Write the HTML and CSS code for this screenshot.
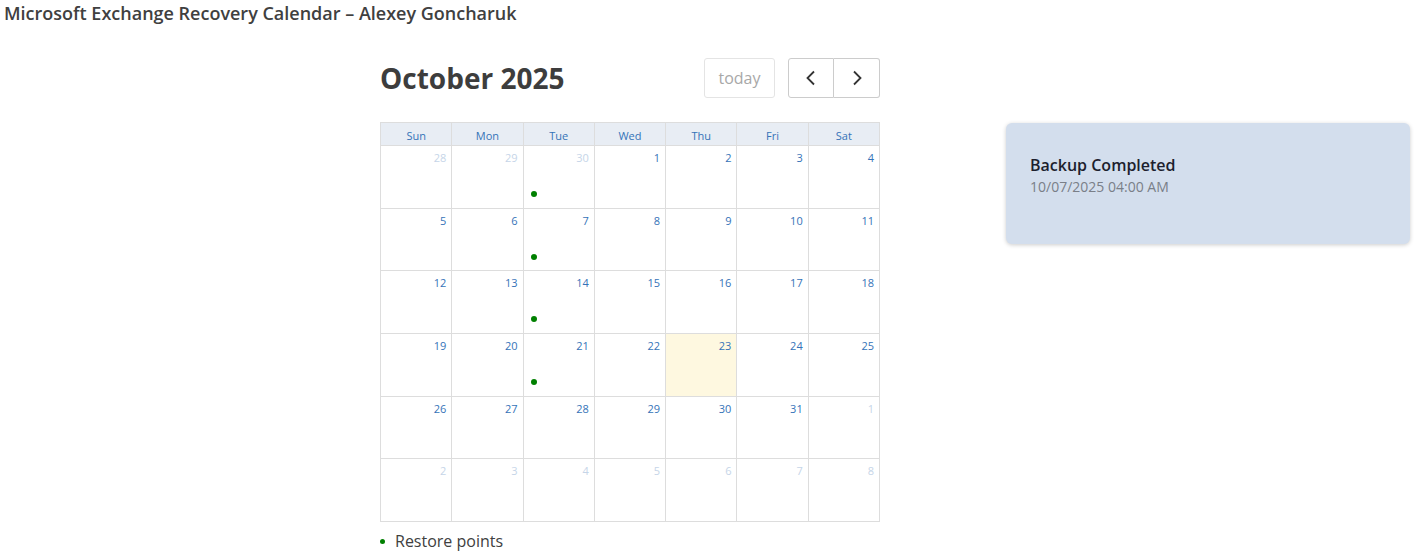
FILE: index.html
```html
<!DOCTYPE html>
<html>
<head>
<meta charset="utf-8">
<link rel="stylesheet" href="styles.css">
</head>
<body>
<h1 class="page-title">Microsoft Exchange Recovery Calendar – Alexey Goncharuk</h1>
<div class="layout">
  <div class="calendar">
    <div class="toolbar">
      <h2 class="month">October 2025</h2>
      <div class="tools">
        <button class="btn today" disabled>today</button>
        <div class="btn-group">
          <button class="btn nav"><svg width="16" height="16" viewBox="0 0 16 16"><path d="M11 1.5 L4.5 8 L11 14.5" fill="none" stroke="#333" stroke-width="1.8"/></svg></button>
          <button class="btn nav"><svg width="16" height="16" viewBox="0 0 16 16"><path d="M5 1.5 L11.5 8 L5 14.5" fill="none" stroke="#333" stroke-width="1.8"/></svg></button>
        </div>
      </div>
    </div>
    <div class="grid-head">
      <div class="dow">Sun</div><div class="dow">Mon</div><div class="dow">Tue</div><div class="dow">Wed</div><div class="dow">Thu</div><div class="dow">Fri</div><div class="dow">Sat</div>
    </div>
    <div class="grid-body">
      <div class="day other"><span class="num">28</span></div>
      <div class="day other"><span class="num">29</span></div>
      <div class="day other"><span class="num">30</span><i class="dot"></i></div>
      <div class="day"><span class="num">1</span></div>
      <div class="day"><span class="num">2</span></div>
      <div class="day"><span class="num">3</span></div>
      <div class="day"><span class="num">4</span></div>

      <div class="day"><span class="num">5</span></div>
      <div class="day"><span class="num">6</span></div>
      <div class="day"><span class="num">7</span><i class="dot"></i></div>
      <div class="day"><span class="num">8</span></div>
      <div class="day"><span class="num">9</span></div>
      <div class="day"><span class="num">10</span></div>
      <div class="day"><span class="num">11</span></div>

      <div class="day"><span class="num">12</span></div>
      <div class="day"><span class="num">13</span></div>
      <div class="day"><span class="num">14</span><i class="dot"></i></div>
      <div class="day"><span class="num">15</span></div>
      <div class="day"><span class="num">16</span></div>
      <div class="day"><span class="num">17</span></div>
      <div class="day"><span class="num">18</span></div>

      <div class="day"><span class="num">19</span></div>
      <div class="day"><span class="num">20</span></div>
      <div class="day"><span class="num">21</span><i class="dot"></i></div>
      <div class="day"><span class="num">22</span></div>
      <div class="day today-cell"><span class="num">23</span></div>
      <div class="day"><span class="num">24</span></div>
      <div class="day"><span class="num">25</span></div>

      <div class="day"><span class="num">26</span></div>
      <div class="day"><span class="num">27</span></div>
      <div class="day"><span class="num">28</span></div>
      <div class="day"><span class="num">29</span></div>
      <div class="day"><span class="num">30</span></div>
      <div class="day"><span class="num">31</span></div>
      <div class="day other"><span class="num">1</span></div>

      <div class="day other"><span class="num">2</span></div>
      <div class="day other"><span class="num">3</span></div>
      <div class="day other"><span class="num">4</span></div>
      <div class="day other"><span class="num">5</span></div>
      <div class="day other"><span class="num">6</span></div>
      <div class="day other"><span class="num">7</span></div>
      <div class="day other"><span class="num">8</span></div>
    </div>
    <div class="legend"><i class="legend-dot"></i><span>Restore points</span></div>
  </div>
  <div class="side">
    <div class="card">
      <div class="card-title">Backup Completed</div>
      <div class="card-date">10/07/2025 04:00 AM</div>
    </div>
  </div>
</div>
</body>
</html>
```

FILE: styles.css
```css
* { box-sizing: border-box; }
html, body { margin: 0; padding: 0; background: #fff; }
body { font-family: "Open Sans", "Noto Sans", sans-serif; color: #404040; }

.page-title {
  margin: 0;
  padding: 1px 0 0 4px;
  font-size: 18px;
  font-weight: 600;
  line-height: 25px;
  color: #404040;
}

.layout {
  display: grid;
  grid-template-columns: 500px 404px;
  column-gap: 126px;
  padding-left: 380px;
  margin-top: 32px;
}

.toolbar {
  display: flex;
  align-items: center;
  justify-content: space-between;
  height: 40px;
  margin-bottom: 24px;
}
.month {
  margin: 0;
  font-size: 28px;
  font-weight: 700;
  color: #3d3d3d;
  line-height: 40px;
}
.tools { display: flex; align-items: center; gap: 13px; }
.btn {
  font-family: inherit;
  background: #fff;
  border: 1px solid #ccc;
  height: 40px;
  padding: 0;
  display: flex;
  align-items: center;
  justify-content: center;
}
.today {
  width: 71px;
  font-size: 16px;
  color: #a8a8a8;
  border-color: #e4e4e4;
  border-radius: 3px;
}
.btn-group { display: flex; }
.nav { width: 46px; }
.nav:first-child { border-radius: 3px 0 0 3px; }
.nav:last-child { border-radius: 0 3px 3px 0; border-left: none; }

.grid-head, .grid-body {
  display: grid;
  grid-template-columns: repeat(7, 1fr);
  border-left: 1px solid #ddd;
}
.grid-head { border-top: 1px solid #ddd; }
.dow {
  height: 23px;
  background: #e8edf4;
  border-right: 1px solid #ddd;
  border-bottom: 1px solid #ddd;
  font-size: 11px;
  line-height: 22px;
  padding-top: 2px;
  text-align: center;
  color: #3573b8;
}
.grid-body { grid-template-rows: repeat(6, 1fr); height: 376px; }
.day {
  position: relative;
  border-right: 1px solid #ddd;
  border-bottom: 1px solid #ddd;
  display: flex;
  flex-direction: column;
  align-items: flex-end;
  padding: 4px 5px 0 0;
}
.num {
  font-size: 11px;
  line-height: 16px;
  color: #3573b8;
}
.other .num { color: #c6d5e8; }
.today-cell { background: #fef8e0; }
.dot {
  position: absolute;
  left: 7px;
  top: 45px;
  width: 6px;
  height: 6px;
  border-radius: 50%;
  background: #008000;
}

.legend {
  display: flex;
  align-items: center;
  gap: 10px;
  margin-top: 8px;
  font-size: 16px;
  line-height: 22px;
  color: #404040;
}
.legend-dot {
  width: 5px;
  height: 5px;
  border-radius: 50%;
  background: #008000;
}

.side { padding-top: 65px; }
.card {
  height: 121px;
  background: #d3deed;
  border-radius: 6px;
  box-shadow: 0 1px 4px rgba(0,0,0,0.2);
  padding: 30px 24px 0 24px;
}
.card-title {
  font-size: 16px;
  font-weight: 600;
  color: #1d1f2e;
  line-height: 24px;
}
.card-date {
  font-size: 14px;
  color: #7a7f88;
  line-height: 20px;
}
```
